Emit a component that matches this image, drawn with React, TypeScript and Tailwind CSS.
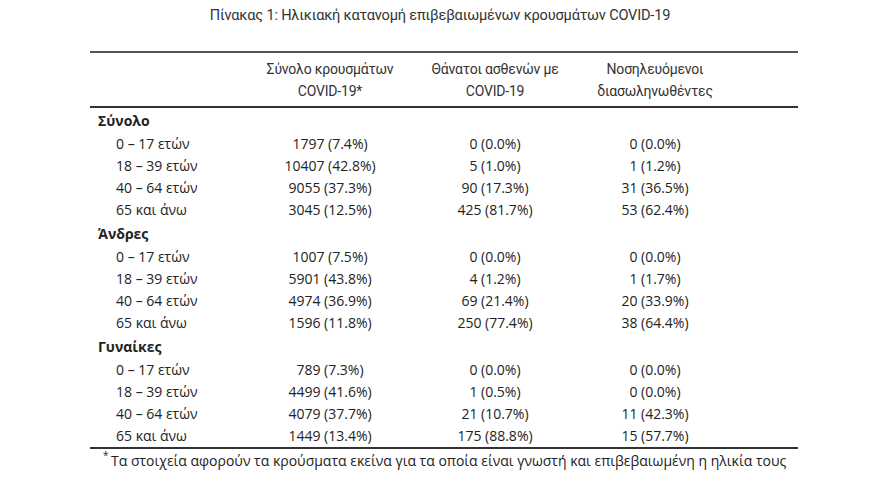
const groups = [
  {
    title: 'Σύνολο',
    rows: [
      ['0 – 17 ετών', '1797 (7.4%)', '0 (0.0%)', '0 (0.0%)'],
      ['18 – 39 ετών', '10407 (42.8%)', '5 (1.0%)', '1 (1.2%)'],
      ['40 – 64 ετών', '9055 (37.3%)', '90 (17.3%)', '31 (36.5%)'],
      ['65 και άνω', '3045 (12.5%)', '425 (81.7%)', '53 (62.4%)'],
    ],
  },
  {
    title: 'Άνδρες',
    rows: [
      ['0 – 17 ετών', '1007 (7.5%)', '0 (0.0%)', '0 (0.0%)'],
      ['18 – 39 ετών', '5901 (43.8%)', '4 (1.2%)', '1 (1.7%)'],
      ['40 – 64 ετών', '4974 (36.9%)', '69 (21.4%)', '20 (33.9%)'],
      ['65 και άνω', '1596 (11.8%)', '250 (77.4%)', '38 (64.4%)'],
    ],
  },
  {
    title: 'Γυναίκες',
    rows: [
      ['0 – 17 ετών', '789 (7.3%)', '0 (0.0%)', '0 (0.0%)'],
      ['18 – 39 ετών', '4499 (41.6%)', '1 (0.5%)', '0 (0.0%)'],
      ['40 – 64 ετών', '4079 (37.7%)', '21 (10.7%)', '11 (42.3%)'],
      ['65 και άνω', '1449 (13.4%)', '175 (88.8%)', '15 (57.7%)'],
    ],
  },
]

// label | cases | deaths | intubated | empty
const grid = 'grid grid-cols-[154px_172px_158px_162px_1fr]'

export default function App() {
  return (
    <div className="w-[880px] h-[486px] bg-white text-[#232323] overflow-hidden">
      <div className="ml-[90px] w-[708px]">
        <div className="h-[51px] pt-[5px] pr-[8px] text-center text-[14.6px] leading-[20px] font-['Roboto',sans-serif] tracking-[-0.2px] text-[#333]">
          Πίνακας 1: Ηλικιακή κατανομή επιβεβαιωμένων κρουσμάτων COVID-19
        </div>
        <div className="h-[2px] bg-[#555]" />
        <div className={`${grid} h-[53px] pt-[5px] text-[14px] leading-[22px] font-['Roboto',sans-serif] tracking-[-0.2px] text-center text-[#333]`}>
          <div />
          <div>Σύνολο κρουσμάτων<br />COVID-19*</div>
          <div>Θάνατοι ασθενών με<br />COVID-19</div>
          <div>Νοσηλευόμενοι<br />διασωληνωθέντες</div>
          <div />
        </div>
        <div className="h-[2px] bg-[#333]" />
        <div className="font-['Open_Sans',sans-serif] text-[14px]">
          {groups.map((g) => (
            <div key={g.title}>
              <div className="h-[25px] leading-[25px] pl-[8px] font-bold">{g.title}</div>
              {g.rows.map((r) => (
                <div key={r[0]} className={`${grid} h-[22px] leading-[22px]`}>
                  <div className="pl-[26px]">{r[0]}</div>
                  <div className="text-center">{r[1]}</div>
                  <div className="text-center">{r[2]}</div>
                  <div className="text-center">{r[3]}</div>
                  <div />
                </div>
              ))}
            </div>
          ))}
        </div>
        <div className="h-[2px] bg-[#333]" />
        <div className="flex items-start pl-[13px] whitespace-nowrap font-['Open_Sans',sans-serif] text-[#222]">
          <span className="text-[10px] leading-[10px] pt-[1px] w-[8px]">*</span>
          <span className="text-[14px] leading-[24px]">
            Τα στοιχεία αφορούν τα κρούσματα εκείνα για τα οποία είναι γνωστή και επιβεβαιωμένη η ηλικία τους
          </span>
        </div>
      </div>
    </div>
  )
}
